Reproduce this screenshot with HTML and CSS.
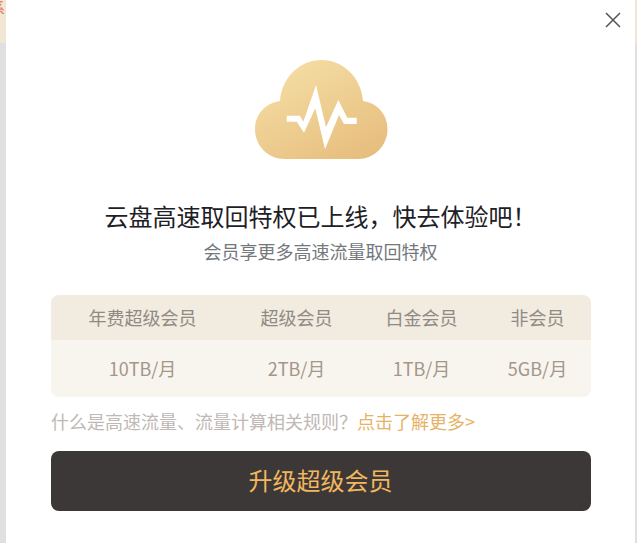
FILE: index.html
```html
<!DOCTYPE html>
<html lang="zh">
<head>
<meta charset="utf-8">
<title>云盘高速取回特权</title>
<link rel="stylesheet" href="styles.css">
</head>
<body>
<div class="backdrop">
  <div class="backdrop-top"><span class="backdrop-text">系</span></div>
</div>
<main class="modal">
  <button class="close" aria-label="关闭">
    <svg width="16" height="16" viewBox="0 0 16 16"><path d="M1 1L15 15M15 1L1 15" stroke="#555" stroke-width="1.5" fill="none"/></svg>
  </button>
  <svg class="cloud" width="133" height="100" viewBox="0 0 133 100">
    <defs><linearGradient id="g" x1="0.15" y1="0" x2="0.85" y2="1"><stop offset="0" stop-color="#f6dfa6"/><stop offset="1" stop-color="#e6bd7d"/></linearGradient></defs>
    <path d="M25 41C27 17 45 0 66.500 0C88 0 106 17 108 41C122 43 132.500 54 132.500 69C132.500 86 119 99 103 99H30C13 99 0 86 0 69C0 54 11 43 25 41Z" fill="url(#g)"/>
    <path d="M31.700 55.700H45L48.300 61.700L61 25L71 67.300L83.300 40L92.300 57.700H101.700V64H89L84 55L70 89.300L60.300 48.300L49 72.700L41.700 61.700H31.700Z" fill="#fff"/>
  </svg>
  <h1 class="title">云盘高速取回特权已上线，快去体验吧！</h1>
  <p class="subtitle">会员享更多高速流量取回特权</p>
  <div class="table">
    <div class="row head">
      <span class="c1">年费超级会员</span><span class="c2">超级会员</span><span class="c3">白金会员</span><span class="c4">非会员</span>
    </div>
    <div class="row body">
      <span class="c1">10TB/月</span><span class="c2">2TB/月</span><span class="c3">1TB/月</span><span class="c4">5GB/月</span>
    </div>
  </div>
  <p class="note">什么是高速流量、流量计算相关规则？<a class="more">点击了解更多&gt;</a></p>
  <button class="upgrade">升级超级会员</button>
</main>
<div class="backdrop backdrop-right">
  <div class="backdrop-top"></div>
</div>
</body>
</html>
```
FILE: styles.css
```css
* { box-sizing: border-box; }
html, body { margin: 0; height: 100%; overflow: hidden; }
body {
  display: flex;
  width: 637px;
  height: 543px;
  background: #e0e0e0;
  font-family: "Noto Sans CJK SC", "Liberation Sans", sans-serif;
}
.backdrop { width: 6px; flex: none; overflow: hidden; }
.backdrop-right { width: 2px; }
.backdrop-top { height: 43px; background: #efe6d3; }
.backdrop-text { display: block; font-size: 14px; line-height: 14px; color: #e8735a; margin-left: -9px; }
.modal {
  position: relative;
  width: 629px;
  flex: none;
  height: 543px;
  background: #fff;
  padding-top: 60px;
  display: flex;
  flex-direction: column;
  align-items: center;
}
.close {
  position: absolute;
  top: 12px;
  right: 14px;
  width: 16px;
  height: 16px;
  padding: 0;
  border: 0;
  background: none;
  display: flex;
}
.cloud { flex: none; margin-left: 2px; }
.title {
  margin: 41px 0 0;
  font-size: 24px;
  line-height: 30px;
  font-weight: 400;
  color: #1d2126;
}
.subtitle {
  margin: 8px 0 0;
  font-size: 18px;
  line-height: 24px;
  color: #74787d;
}
.table {
  width: 540px;
  margin-top: 32px;
  border-radius: 8px;
  overflow: hidden;
  font-size: 18px;
}
.row { display: grid; grid-template-columns: 184px 124px 126px 106px; align-items: center; text-align: center; padding-bottom: 2px; }
.head { height: 45px; background: #f1ebe0; color: #8f8a84; }
.body { height: 57px; background: #f8f5ef; color: #a3968a; }
.note {
  align-self: flex-start;
  margin: 11px 0 0 45px;
  font-size: 18px;
  line-height: 26px;
  color: #c0b8b5;
}
.more { color: #e6b266; }
.upgrade {
  width: 540px;
  height: 60px;
  margin-top: 17px;
  padding: 0 0 4px;
  border: 0;
  border-radius: 8px;
  background: #3c3837;
  color: #f2b65e;
  font-family: inherit;
  font-size: 24px;
}
```
